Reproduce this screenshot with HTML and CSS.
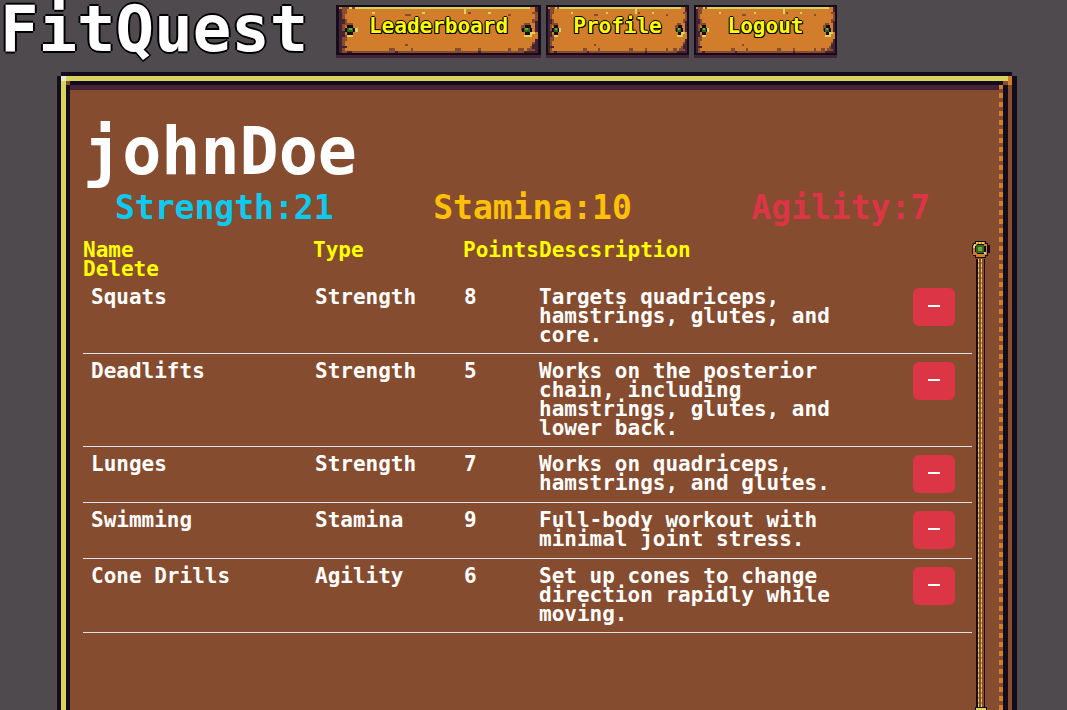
FILE: index.html
```html
<!DOCTYPE html>
<html lang="en">
<head>
<meta charset="utf-8">
<title>FitQuest</title>
<link rel="stylesheet" href="styles.css">
</head>
<body>
<svg class="sprite" aria-hidden="true">
  <symbol id="plank" viewBox="0 0 143 53" preserveAspectRatio="none">
    <path fill="#442434" d="M0 50h143v3H0z"/>
    <path fill="#140c1c" d="M0 0h143v50H0z"/>
    <path fill="#d27d2c" d="M2 2h139v46H2z"/>
    <path fill="#dad45e" d="M13 2h122v2H13zM9 2h2v2H9zM25 7h2v2h-2zM60 7h2v2h-2zM89 4h2v5h-2zM106 7h2v2h-2z"/>
    <path fill="#854c30" d="M4 2h5v2H4zM11 2h2v2h-2zM4 4h4v5H4zM4 9h2v39H4zM6 14h2v6H6zM6 30h2v6H6zM6 46h135v2H6zM37 43h4v3h-4zM52 43h2v3h-2zM83 43h4v3h-4zM99 43h2v3h-2zM120 43h2v3h-2zM127 43h4v3h-4zM133 43h8v3h-8zM135 41h4v3h-4zM137 37h2v5h-2zM137 7h2v2h-2zM139 7h2v9h-2zM137 14h2v4h-2zM48 9h4v2h-4zM120 9h2v2h-2zM92 7h2v2h-2zM48 39h2v2h-2zM131 18h4v3h-4zM129 20h3v6h-3zM7 18h5v3H7z"/>
    <path fill="#442434" d="M2 4h2v44H2zM4 14h2v5H4zM4 26h2v6H4zM4 41h4v2H4zM8 46h3v2H8zM139 2h2v5h-2zM139 16h2v11h-2zM139 34h2v14h-2zM137 39h2v5h-2zM131 46h8v2h-8zM41 46h2v2h-2zM99 46h2v2h-2z"/>
    <path fill="#dad45e" d="M13 23h2v4h-2zM8 30h4v2H8zM135 27h2v5h-2zM131 30h4v2h-4zM137 27h2v2h-2z"/>
    <path fill="#140c1c" d="M8 20h4v3H8zM6 23h7v4H6zM8 27h4v3H8zM132 20h4v3h-4zM130 23h7v4h-7zM132 27h3v3h-3z"/>
    <path fill="#346524" d="M8 23h4v4H8zM131 23h4v4h-4z"/>
    <path fill="#6daa2c" d="M9 23h2v2H9zM132 23h2v2h-2z"/>
  </symbol>
</svg>
<header class="topbar">
  <h1 class="brand">FitQuest</h1>
  <nav class="menu">
    <button class="plank" type="button"><svg class="plank-art" aria-hidden="true"><use href="#plank"/></svg><span class="plank-label">Leaderboard</span></button>
    <button class="plank" type="button"><svg class="plank-art" aria-hidden="true"><use href="#plank"/></svg><span class="plank-label">Profile</span></button>
    <button class="plank" type="button"><svg class="plank-art" aria-hidden="true"><use href="#plank"/></svg><span class="plank-label">Logout</span></button>
  </nav>
</header>
<main class="frame">
  <h2 class="user">johnDoe</h2>
  <div class="stats">
    <span class="stat strength">Strength:21</span>
    <span class="stat stamina">Stamina:10</span>
    <span class="stat agility">Agility:7</span>
  </div>
  <div class="log">
    <table class="exercises">
      <thead>
        <tr><th>Name</th><th>Type</th><th>Points</th><th>Descsription</th><th>Delete</th></tr>
      </thead>
      <tbody>
        <tr><td>Squats</td><td>Strength</td><td>8</td><td>Targets quadriceps, hamstrings, glutes, and core.</td><td><button class="remove" type="button" aria-label="Delete Squats"><span class="minus"></span></button></td></tr>
        <tr><td>Deadlifts</td><td>Strength</td><td>5</td><td>Works on the posterior chain, including hamstrings, glutes, and lower back.</td><td><button class="remove" type="button" aria-label="Delete Deadlifts"><span class="minus"></span></button></td></tr>
        <tr><td>Lunges</td><td>Strength</td><td>7</td><td>Works on quadriceps, hamstrings, and glutes.</td><td><button class="remove" type="button" aria-label="Delete Lunges"><span class="minus"></span></button></td></tr>
        <tr><td>Swimming</td><td>Stamina</td><td>9</td><td>Full-body workout with minimal joint stress.</td><td><button class="remove" type="button" aria-label="Delete Swimming"><span class="minus"></span></button></td></tr>
        <tr><td>Cone Drills</td><td>Agility</td><td>6</td><td>Set up cones to change direction rapidly while moving.</td><td><button class="remove" type="button" aria-label="Delete Cone Drills"><span class="minus"></span></button></td></tr>
      </tbody>
    </table>
    <div class="rod" aria-hidden="true">
      <svg class="knob" viewBox="0 0 18 18" shape-rendering="crispEdges">
        <path fill="#140c1c" d="M3 0h11v2h2v2h2v8h-2v3h-2v2H3v-2H1v-2H0V4h1V2h2z"/>
        <path fill="#d27d2c" d="M4 1h9v2h2v11h-2v2H4v-2H1V4h3z"/>
        <path fill="#dad45e" d="M4 1h2v2H4zM7 1h2v2H7zM10 1h2v2h-2zM1 5h2v2H1zM12 11h2v2h-2zM2 3h2v2H2z"/>
        <path fill="#140c1c" d="M5 3h7v2h2v6h-2v2H5v-2H3V5h2z"/>
        <path fill="#346524" d="M4 4h8v8H4z"/>
        <path fill="#6daa2c" d="M6 6h4v4H6z"/>
      </svg>
      <div class="shaft"></div>
      <div class="cap"></div>
    </div>
  </div>
</main>
</body>
</html>
```
FILE: styles.css
```css
:root {
  --ink: #140c1c;
  --stone: #4e4a4e;
  --wood: #854c30;
  --orange: #d27d2c;
  --gold: #dad45e;
  --plum: #442434;
}

* {
  box-sizing: border-box;
}

body {
  display: flex;
  flex-direction: column;
  min-height: 100vh;
  margin: 0;
  background: var(--stone);
  color: #fff;
  font: bold 21px/19px "DejaVu Sans Mono", monospace;
}

.sprite {
  display: none;
}

button {
  border: 0;
  padding: 0;
  font: inherit;
  cursor: pointer;
}

.topbar {
  display: flex;
  gap: 16px;
  padding: 5px 0 14px;
}

.brand {
  width: 320px;
  margin: 0;
  font-size: 64px;
  line-height: 48px;
  text-shadow: 2px 0 #000, -2px 0 #000, 0 2px #000, 0 -2px #000;
}

.menu {
  display: grid;
  grid-template-columns: 205px 143px 143px;
  gap: 5px;
}

.plank {
  position: relative;
  height: 53px;
  background: none;
  color: #ff0;
}

.plank-art {
  position: absolute;
  inset: 0;
  width: 100%;
  height: 100%;
  shape-rendering: crispEdges;
}

.plank-label {
  position: relative;
  display: block;
  padding-bottom: 10px;
  text-shadow: 1px 0 #000, -1px 0 #000, 0 1px #000, 0 -1px #000, 1px 1px #000, -1px 1px #000;
}

.frame {
  display: flex;
  flex: 1;
  flex-direction: column;
  margin: 0 50px 0 57px;
  padding: 50px 27px 0 26px;
  background:
    linear-gradient(var(--stone), var(--stone)) left 0 top 0 / 4px 4px no-repeat,
    linear-gradient(var(--stone), var(--stone)) right 0 top 0 / 5px 4px no-repeat,
    linear-gradient(#deeed6, #deeed6) left 4px top 4px / 5px 5px no-repeat,
    linear-gradient(var(--wood), var(--wood)) left 9px top 9px / 4px 4px no-repeat,
    linear-gradient(var(--orange), var(--orange)) right 5px top 4px / 4px 9px no-repeat,
    linear-gradient(var(--wood), var(--wood)) right 9px top 9px / 5px 4px no-repeat,
    linear-gradient(var(--ink), var(--ink)) left 0 top 0 / 4px 100% no-repeat,
    linear-gradient(var(--ink), var(--ink)) right 0 top 0 / 5px 100% no-repeat,
    linear-gradient(var(--ink), var(--ink)) left 0 top 0 / 100% 4px no-repeat,
    linear-gradient(var(--gold), var(--gold)) left 0 top 4px / 100% 5px no-repeat,
    linear-gradient(var(--gold), var(--gold)) left 4px top 0 / 5px 100% no-repeat,
    linear-gradient(var(--wood), var(--wood)) right 5px top 13px / 4px 100% no-repeat,
    linear-gradient(var(--ink), var(--ink)) left 0 top 9px / 100% 4px no-repeat,
    linear-gradient(var(--ink), var(--ink)) left 9px top 0 / 4px 100% no-repeat,
    linear-gradient(var(--ink), var(--ink)) right 9px top 0 / 5px 100% no-repeat,
    linear-gradient(var(--wood) 4px, var(--orange) 4px) right 14px top 8px / 4px 9px repeat-y,
    linear-gradient(var(--plum), var(--plum)) left 0 top 13px / 100% 5px no-repeat,
    var(--wood);
}

.user {
  margin: 0;
  font-size: 65px;
  line-height: 60px;
}

.stats {
  display: grid;
  grid-template-columns: 4fr 4fr 3fr;
  margin-top: 8px;
  padding-left: 32px;
  font-size: 33px;
  line-height: 36px;
}

.strength {
  color: #0dcaf0;
}

.stamina {
  color: #ffc107;
}

.agility {
  color: #dc3545;
}

.log {
  display: flex;
  flex: 1;
  margin-top: 15px;
}

.exercises,
.exercises thead,
.exercises tbody {
  display: block;
}

.exercises {
  flex: 1;
}

.exercises thead tr {
  display: flex;
  flex-wrap: wrap;
  padding-bottom: 1px;
  color: #ff0;
}

.exercises th {
  width: 230px;
  padding: 0;
  text-align: left;
}

.exercises th:nth-child(2) {
  width: 150px;
}

.exercises th:nth-child(3) {
  width: 76px;
}

.exercises th:nth-child(4) {
  width: 42%;
}

.exercises tbody tr {
  display: grid;
  grid-template-columns: 224fr 149fr 75fr 374fr 67fr;
  border-bottom: 1px solid #dee2e6;
}

.exercises td {
  padding: 8px;
}

.exercises td:nth-child(4) {
  padding-right: 32px;
}

.exercises td:nth-child(5) {
  height: 55px;
}

.remove {
  display: grid;
  place-items: center;
  width: 42px;
  height: 38px;
  border-radius: 6px;
  background: #dc3545;
}

.minus {
  width: 12px;
  height: 2px;
  margin-bottom: 2px;
  background: #fff;
}

.rod {
  display: flex;
  flex-direction: column;
  width: 18px;
}

.knob {
  display: block;
  width: 18px;
  height: 18px;
}

.shaft {
  flex: 1;
  width: 9px;
  margin-left: 4px;
  background:
    repeating-linear-gradient(var(--gold) 0 3px, var(--orange) 3px 5px) 2px 0 / 1px 100% no-repeat,
    repeating-linear-gradient(var(--gold) 0 3px, var(--orange) 3px 5px) 5px 0 / 1px 100% no-repeat,
    linear-gradient(90deg, var(--ink) 2px, var(--wood) 2px 8px, var(--ink) 8px);
}

.cap {
  width: 12px;
  height: 3px;
  margin-left: 3px;
  border: 1px solid var(--ink);
  border-bottom: 0;
  background: var(--gold);
}
```
